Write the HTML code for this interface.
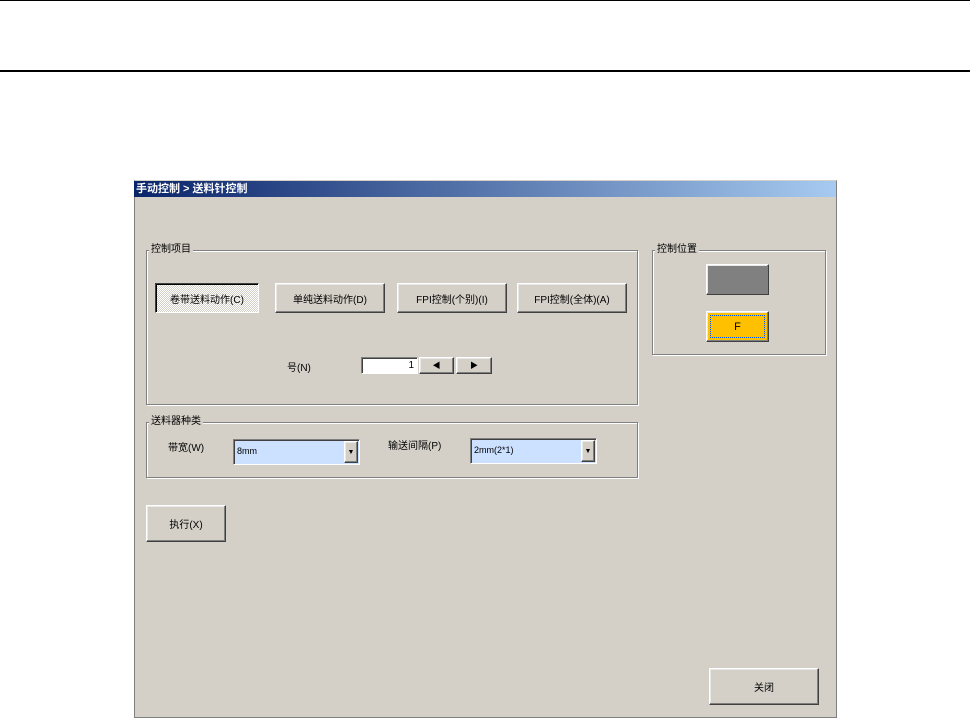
<!DOCTYPE html><html><head><meta charset="utf-8"><style>
*{box-sizing:border-box;margin:0;padding:0}
body{width:970px;height:718px;background:#fff;position:relative;overflow:hidden;font-family:"Liberation Sans","Noto Sans CJK SC",sans-serif;font-size:11px;color:#000}
.a{position:absolute}
.dlg{left:134px;top:180px;width:703px;height:538px;background:#d4d0c8;border:1px solid #808080;border-top-color:#d4d0c8}
.title{left:0;top:0;width:702px;height:16px;background:linear-gradient(90deg,#0a246a,#a6caf0);color:#fff;font-weight:bold;font-size:11px;line-height:16px;padding-left:2px}
.btn{background:#d4d0c8;border:1px solid;border-color:#fff #404040 #404040 #fff;box-shadow:inset -1px -1px 0 #808080,inset 1px 1px 0 #e8e8e8;text-align:center;font-size:10px;display:flex;align-items:center;justify-content:center}
.grp{border:1px solid #808080;box-shadow:1px 1px 0 #fff,inset 1px 1px 0 #fff}
.lg{background:#d4d0c8;padding:0 2px;font-size:10px;line-height:12px}
.sunk{border:1px solid;border-color:#808080 #fff #fff #808080;box-shadow:inset 1px 1px 0 #404040}
</style></head><body>
<div class="a" style="left:0;top:0;width:970px;height:1px;background:#000"></div>
<div class="a" style="left:0;top:70px;width:970px;height:2px;background:#000"></div>
<div class="a dlg">
<div class="a" style="left:-1px;top:0;width:703px;height:536px">
<div class="a title">手动控制 &gt; 送料针控制</div>
<div class="a grp" style="left:12px;top:69px;width:492px;height:155px"></div>
<div class="a lg" style="left:15px;top:63px">控制项目</div>
<div class="a btn" style="left:21px;top:102px;width:104px;height:30px;background:repeating-conic-gradient(#d4d0c8 0 25%,#fff 0 50%) 0 0/2px 2px;border-color:#404040 #fff #fff #404040;box-shadow:inset 1px 1px 0 #000">卷带送料动作(C)</div>
<div class="a btn" style="left:141px;top:102px;width:110px;height:30px">单纯送料动作(D)</div>
<div class="a btn" style="left:263px;top:102px;width:110px;height:30px">FPI控制(个别)(I)</div>
<div class="a btn" style="left:383px;top:102px;width:110px;height:30px">FPI控制(全体)(A)</div>
<div class="a" style="left:153px;top:178px;font-size:10px">号(N)</div>
<div class="a sunk" style="left:227px;top:176px;width:57px;height:17px;background:#fff;text-align:right;font-size:10px;padding-right:3px;line-height:15px">1</div>
<div class="a btn" style="left:285px;top:176px;width:35px;height:17px;font-size:8px">◀</div>
<div class="a btn" style="left:322px;top:176px;width:36px;height:17px;font-size:8px">▶</div>
<div class="a grp" style="left:12px;top:241px;width:492px;height:56px"></div>
<div class="a lg" style="left:15px;top:235px">送料器种类</div>
<div class="a" style="left:34px;top:258px;font-size:10px">带宽(W)</div>
<div class="a sunk" style="left:99px;top:258px;width:127px;height:26px;background:#cce0ff;font-size:9px;line-height:22px;padding-left:3px">8mm</div>
<div class="a btn" style="left:210px;top:260px;width:14px;height:22px;font-size:7px">▼</div>
<div class="a" style="left:254px;top:256px;font-size:10px">输送间隔(P)</div>
<div class="a sunk" style="left:336px;top:257px;width:127px;height:26px;background:#cce0ff;font-size:9px;line-height:22px;padding-left:3px">2mm(2*1)</div>
<div class="a btn" style="left:447px;top:259px;width:14px;height:22px;font-size:7px">▼</div>
<div class="a btn" style="left:12px;top:324px;width:80px;height:37px">执行(X)</div>
<div class="a grp" style="left:518px;top:69px;width:174px;height:105px"></div>
<div class="a lg" style="left:521px;top:63px">控制位置</div>
<div class="a btn" style="left:572px;top:83px;width:63px;height:31px;background:#808080"></div>
<div class="a btn" style="left:572px;top:130px;width:63px;height:31px;background:#ffc000;font-size:11px"><div style="border:1px dotted #0050ff;width:55px;height:23px;display:flex;align-items:center;justify-content:center">F</div></div>
<div class="a btn" style="left:575px;top:487px;width:110px;height:37px">关闭</div>
</div>
</div>
</body></html>
